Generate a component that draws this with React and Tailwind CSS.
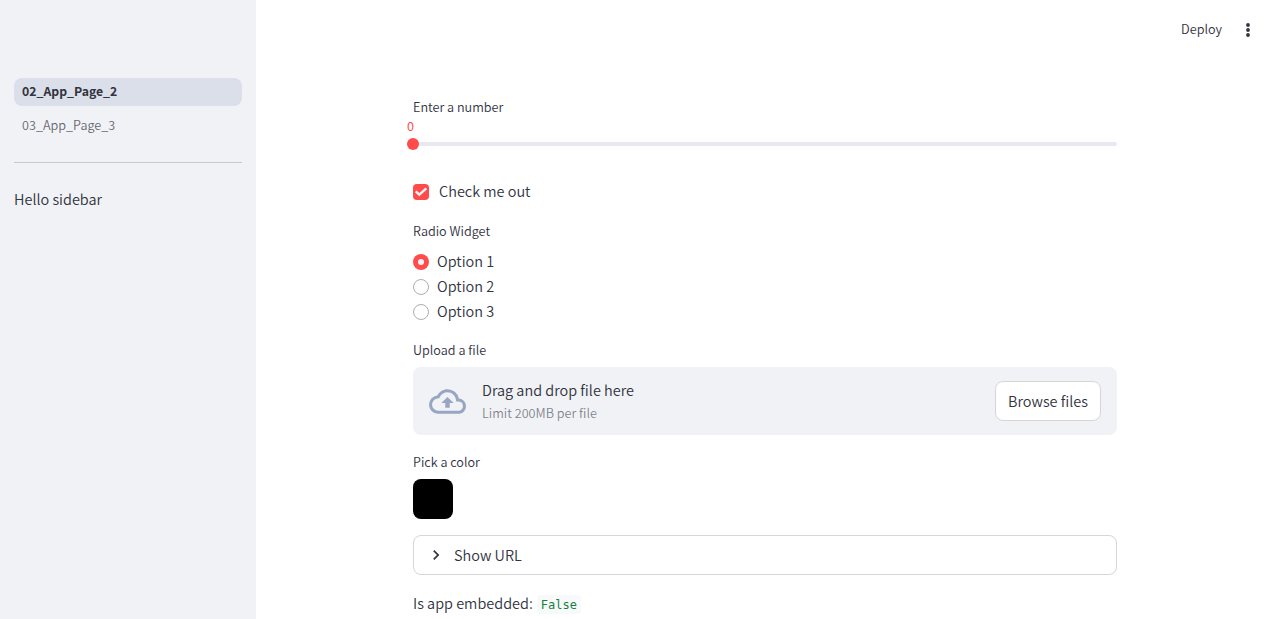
import React from "react";
import { MdOutlineCloudUpload, MdChevronRight } from "react-icons/md";

const Label = ({ children }) => (
  <div className="h-5 text-[12.65px] leading-5">{children}</div>
);

const Radio = ({ label, selected }) => (
  <label className="flex h-[25px] items-center gap-2">
    {selected ? (
      <span className="flex size-4 items-center justify-center rounded-full bg-[#ff4b4b]">
        <span className="size-1.5 rounded-full bg-[#f0f2f6]" />
      </span>
    ) : (
      <span className="size-4 rounded-full border border-[#adaeb2] bg-white" />
    )}
    <span className="pb-0.5 text-[14.48px] leading-[23px]">{label}</span>
  </label>
);

export default function App() {
  return (
    <div className="flex h-[619px] w-full overflow-hidden bg-white font-['Noto_Sans_CJK_SC','Noto_Sans_CJK_JP',sans-serif] text-[14.48px] leading-6 font-[350] text-[#31333f]">
      <aside className="h-full w-64 shrink-0 bg-[#f0f2f6] px-3.5 pt-[78px]">
        <nav className="flex flex-col gap-1.5 text-[12.65px] leading-[26px]">
          <a className="h-7 rounded-lg bg-[#dadfe9] px-2 text-[12.25px] font-bold">02_App_Page_2</a>
          <a className="h-7 rounded-lg px-2 text-[#31333f]/75">03_App_Page_3</a>
        </nav>
        <hr className="mt-[22px] border-[#c7c9ce]" />
        <p className="mt-[24px]">Hello sidebar</p>
      </aside>
      <div className="flex min-w-0 flex-1 flex-col">
        <header className="flex h-[60px] shrink-0 items-center justify-end pr-6">
          <span className="pb-0.5 text-[12.65px] leading-5">Deploy</span>
          <svg className="ml-[18px]" width="16" height="16" viewBox="0 0 16 16" fill="currentColor">
            <circle cx="8" cy="3" r="1.9" />
            <circle cx="8" cy="8" r="1.9" />
            <circle cx="8" cy="13" r="1.9" />
          </svg>
        </header>
        <main className="ml-[157px] flex w-[704px] flex-col">
          <div className="mt-[37px]">
            <Label>Enter a number</Label>
          </div>
          <div className="-ml-1.5 h-5 text-[12.65px] leading-[18px] font-normal text-[#ff4b4b]">0</div>
          <div className="mt-px flex h-3 items-center">
            <span className="-ml-1.5 size-3 shrink-0 rounded-full bg-[#ff4b4b]" />
            <span className="h-1 flex-1 rounded-r bg-[#e6e9ef]" />
          </div>
          <label className="mt-[30px] flex h-6 items-center gap-2.5">
            <span className="flex size-4 items-center justify-center rounded bg-[#ff4b4b]">
              <svg width="14" height="10" viewBox="0 0 14 10" fill="none">
                <path d="M1.7 4.3 5.3 7.7 12.3 1.3" stroke="#f0f2f6" strokeWidth="2.4" />
              </svg>
            </span>
            <span className="pb-0.5">Check me out</span>
          </label>
          <div className="mt-[17px]">
            <Label>Radio Widget</Label>
          </div>
          <div className="mt-2">
            <Radio label="Option 1" selected />
            <Radio label="Option 2" />
            <Radio label="Option 3" />
          </div>
          <div className="mt-4">
            <Label>Upload a file</Label>
          </div>
          <div className="mt-[7px] flex h-[68px] items-center rounded-lg bg-[#f0f2f6] px-4">
            <MdOutlineCloudUpload className="size-[37px] text-[#97a6c3]" />
            <div className="ml-4 flex flex-1 flex-col">
              <span className="h-6 leading-[22px]">Drag and drop file here</span>
              <span className="h-5 text-[12.65px] leading-5 text-[#31333f]/60">Limit 200MB per file</span>
            </div>
            <button className="h-10 w-[106px] rounded-lg border border-[#d6d6d9] bg-white">Browse files</button>
          </div>
          <div className="mt-[17px]">
            <Label>Pick a color</Label>
          </div>
          <div className="mt-[7px] size-10 rounded-lg bg-black" />
          <div className="mt-4 flex h-10 items-center rounded-lg border border-[#d6d6d9] pl-3">
            <MdChevronRight className="-ml-[0.5px] size-5" />
            <span className="ml-[8.5px]">Show URL</span>
          </div>
          <p className="mt-4 flex items-center">
            Is app embedded:
            <code className="mt-0.5 ml-1 h-[19px] rounded bg-[#f8f9fb] px-1 font-['DejaVu_Sans_Mono',monospace] text-[12px] leading-[21px] font-normal text-[#158237]">
              False
            </code>
          </p>
        </main>
      </div>
    </div>
  );
}
